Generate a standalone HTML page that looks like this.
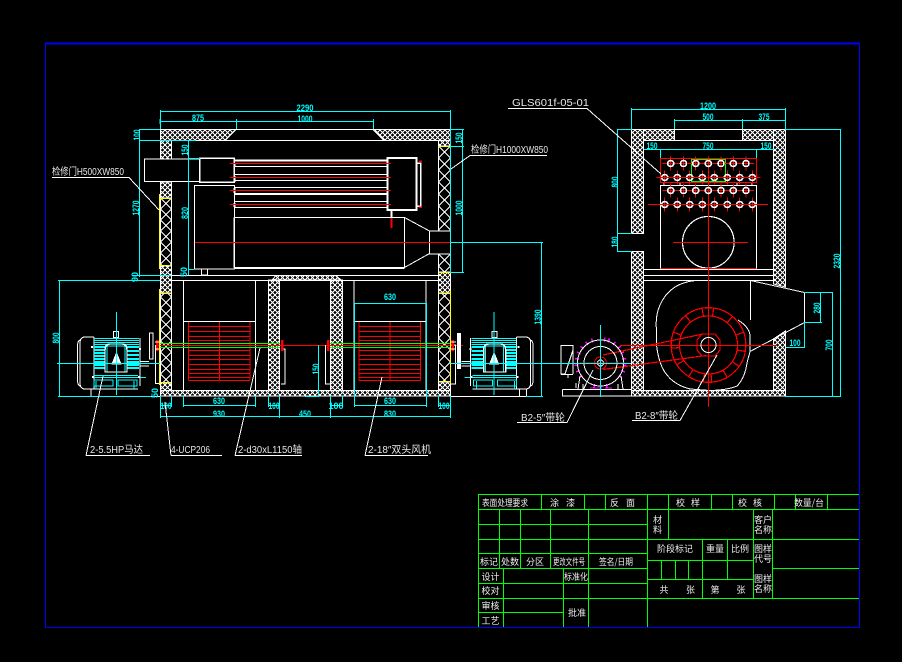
<!DOCTYPE html>
<html><head><meta charset="utf-8"><style>
html,body{margin:0;padding:0;background:#000;width:902px;height:662px;overflow:hidden}
svg{display:block}
.d{font:bold 9px "Liberation Sans",sans-serif;fill:#0ff;text-anchor:middle}
.l{font:10px "Liberation Sans","Noto Sans CJK SC",sans-serif;fill:#e8e8e8}
.t{font:9px "Noto Sans CJK SC","Liberation Sans",sans-serif;fill:#eee;text-anchor:middle}
</style></head><body>
<svg width="902" height="662" viewBox="0 0 902 662" xmlns="http://www.w3.org/2000/svg" shape-rendering="crispEdges">
<defs>
<pattern id="h" width="5" height="5" patternUnits="userSpaceOnUse"><rect width="5" height="5" fill="#000"/><path d="M0 0L5 5M5 0L0 5" stroke="#fff" stroke-width="1" fill="none"/></pattern>
<pattern id="x" x="160.5" y="198" width="11" height="11" patternUnits="userSpaceOnUse"><path d="M0 0L11 11M11 0L0 11" stroke="#fff" stroke-width="1" fill="none"/></pattern>
<pattern id="x2" x="438.5" y="146" width="12" height="12" patternUnits="userSpaceOnUse"><path d="M0 0L12 12M12 0L0 12" stroke="#fff" stroke-width="1" fill="none"/></pattern>
<g id="tb"><path d="M-8 0H8M0-7V7" stroke="#f00" fill="none"/><circle r="3" fill="none" stroke="#fff" stroke-width="1.6"/></g>
<g id="fan">
<path d="M188.5 321.5H250M188.5 326.5H250M188.5 331.5H250M188.5 336.5H250M188.5 340.5H250M188.5 350.5H250M188.5 355.5H250M188.5 359.5H250M188.5 364.5H250M188.5 369.5H250M188.5 373.5H250M188.5 377.5H250M188.5 380.5H250M188.5 321.5V380.5M250 321.5V380.5M219.5 321.5V380.5" stroke="#f00" fill="none"/>
<path d="M183.5 280V391M255.5 280V391M183.5 321.5H255.5" stroke="#fff" fill="none"/>
</g>
<g id="mot" fill="none">
<path d="M94 337H85Q80 337 80 343V383Q80 389 85 389H94M80 340Q77.5 341 77.5 346V380Q77.5 385 80 386M94 337V389M140 338V386M94 389H138" stroke="#fff"/>
<path d="M94 338.500H139M94 340.500H139M94 342.500H139M94 344.500H107M125 344.500H139M93 377.500H146M94 375.500H138M94 380H113V386H94ZM118 380H137V386H118ZM107 346V372H125V346Z" stroke="#0ff"/>
<path d="M94 347H105M94 350H105M94 353H105M94 356H105M94 359H105M94 362H105M94 365H105M127 347H139M127 351H139M127 355H139M127 359H139M127 362H139M127 365H139M127 368H139M94 368H105" stroke="#0ff" stroke-width="2"/>
<path d="M105 350Q105 344 110 344H122Q127 344 127 350V372H105Z" stroke="#fff" stroke-width="1.4"/>
<path d="M116.500 353L112 364H121Z" fill="#fff" stroke="#fff"/>
<rect x="113.500" y="331.500" width="5" height="6" stroke="#fff"/>
<path d="M140 361.500H149M140 366H149" stroke="#fff"/>
<path d="M91 396V389" stroke="#fff"/>
<rect x="91" y="346" width="2" height="2" fill="#fff"/><rect x="92" y="376" width="2" height="2" fill="#fff"/><rect x="138" y="376" width="2" height="2" fill="#fff"/><rect x="139" y="348" width="2" height="2" fill="#fff"/>
<path d="M116.500 312V395M57 363.500H160M96 381V389M134 381V389" stroke="#0ff"/>
</g>
</defs>
<rect width="902" height="662" fill="#000"/>
<!-- frame -->
<path d="M45.500 43V627.500H859.500V43" stroke="#00f" fill="none"/>
<path d="M45 43.500H860" stroke="#00f" stroke-width="2" fill="none"/>

<!-- front view hatch -->
<g stroke="#fff" stroke-width="1">
<path d="M160.500 129.500H236L225 140.500H160.500Z" fill="url(#h)"/>
<path d="M373 129.500H450.500V140.500H384Z" fill="url(#h)"/>
<rect x="160.500" y="140.500" width="11" height="18.500" fill="url(#h)"/>
<rect x="160.500" y="182" width="11" height="16" fill="url(#h)"/>
<rect x="160.500" y="198" width="11" height="68" fill="url(#x)"/>
<rect x="160.500" y="266" width="11" height="27" fill="url(#h)"/>
<rect x="160.500" y="293" width="11" height="90" fill="url(#x)"/>
<rect x="160.500" y="383" width="11" height="8" fill="url(#h)"/>
<rect x="438.500" y="140.500" width="12" height="5.500" fill="url(#h)"/>
<rect x="438.500" y="146" width="12" height="85" fill="url(#x2)"/>
<rect x="438.500" y="254" width="12" height="18" fill="url(#x2)"/>
<rect x="438.500" y="272" width="12" height="21" fill="url(#h)"/>
<rect x="438.500" y="293" width="12" height="89" fill="url(#x2)"/>
<rect x="438.500" y="382" width="12" height="9" fill="url(#h)"/>
<rect x="160.500" y="390.500" width="290" height="5.500" fill="url(#h)"/>
<rect x="268.500" y="280" width="11" height="110.500" fill="url(#h)"/>
<rect x="330.500" y="280" width="12" height="110.500" fill="url(#h)"/>
<path d="M272 280L276 275.500H336L341 280Z" fill="url(#h)"/>
</g>
<path d="M160.500 129.500H450.500M171.500 140.500H438.500M171.500 275.500H438.500M171.500 280.500H438.500" stroke="#fff" fill="none"/>

<!-- front unit -->
<g fill="none" stroke="#fff">
<rect x="144.500" y="159" width="55" height="22.500"/>
<rect x="199.500" y="158" width="34.500" height="24" stroke-width="1.5"/>
<rect x="194.500" y="185.500" width="40" height="83.500" stroke-width="1"/>
<path d="M234 160H387.500M234 166.500H387.500M234 174.500H387.500M234 180.500H387.500M234 187.500H387.500M234 201.500H387.500M234 207.500H387.500" />
<path d="M234 160.500H387M234 194H387" stroke-width="2"/>
<path d="M234 217.500H404.500V267.500M234 217.500V268" />
<path d="M234 268H404.500" stroke-width="2"/>
<rect x="387.500" y="158" width="29" height="52" stroke-width="2"/>
<path d="M417 163H420.500V206H417" stroke-width="1.500"/>
<path d="M404.500 217.500L429.500 231M404.500 267.500L429.500 253.500"/>
<rect x="429.500" y="231" width="21" height="23"/>
<rect x="201.500" y="269" width="6" height="6"/>
<path d="M391.500 211V218" stroke-width="2"/>
<path d="M234.500 163V167M234.500 176V182M234.500 188V193M234.500 203V207" stroke-width="2"/>
</g>
<path d="M230 163.500H391M230 177.500H391M230 190.500H391M230 204.500H391M195 242.500H450" stroke="#f00" fill="none"/>
<path d="M391.500 218V228" stroke="#f00" stroke-width="2" fill="none"/>
<path d="M419 161H422M419 207H422" stroke="#f00" stroke-width="1.500" fill="none"/>

<!-- fans -->
<use href="#fan"/>
<use href="#fan" transform="translate(170.500 0)"/>
<!-- shaft -->
<path d="M155 345.500H463" stroke="#f00" fill="none"/>
<path d="M160 343.500H280M160 347.500H280M330 343.500H450M330 347.500H450" stroke="#0f0" fill="none"/>
<g fill="none" stroke="#fff">
<path d="M155.500 345V383.500H160M281 349H285V384H281M325.500 345V384H330M451 345H455.500V384H451"/>
<rect x="149.500" y="333" width="3.500" height="26"/>
</g>
<rect x="457" y="333" width="4" height="36" fill="#fff"/>
<path d="M157 340V351M282 340V351M328 340V351M452.500 340V351" stroke="#f00" stroke-width="2.500" fill="none"/>
<path d="M155 342H160M155 349H160M450 342H456M450 349H456" stroke="#fff" fill="none"/>

<!-- yellow doors -->
<path d="M159.500 194V269M160 198.500H171.500M160 265.500H171.500M159.500 289V385M160 293.500H171.500M160 382.500H171.500M450.500 145V272M438.500 146.500H450.500M438.500 272.500H450.500M450.500 290V383M438.500 293.500H450.500M438.500 381.500H450.500" stroke="#ff0" stroke-width="1.200" fill="none"/>

<!-- motors -->
<use href="#mot"/>
<use href="#mot" transform="translate(610.600 0) scale(-1 1)"/>
<path d="M90.500 396.500H160.500M450.500 396.500H526.500M526.500 389V396" stroke="#fff" fill="none"/>

<!-- front dims -->
<g stroke="#0ff" fill="none">
<path d="M160.500 110V129M160 111.500H451M450.500 110V272M161 121.500H374M236.500 119V129M373.500 119V129M160 119V124"/>
<path d="M139.500 129V277M139 129.500H160M139 140.500H196M132 275.500H171M188.500 140V275M188 158.500H200M188 269.500H194"/>
<path d="M462.500 129V273M450 129.500H464M450 146.500H464M450 272.500H464"/>
<path d="M450 242.500H543M541.500 242V397M526 396.500H543"/>
<path d="M58 280.500H160M59.500 280V397M58 396.500H151"/>
<path d="M160.500 396V418M171.500 396V407M183.500 396V407M255.500 396V407M268.500 396V407M279.500 396V418M330.500 396V418M342.500 396V407M354.500 303V407M426.500 303V407M438.500 396V407M450.500 396V418"/>
<path d="M160 405.500H172M183 405.500H256M268 405.500H280M331 405.500H343M354 405.500H427M438 405.500H451M160 416.500H451M354 303.500H427"/>
<path d="M318.500 345V396M305 396.500H319"/>
</g>
<g class="d">
<text x="305" y="111" textLength="17" lengthAdjust="spacingAndGlyphs" class="d">2290</text>
<text x="198" y="121" class="d" textLength="12" lengthAdjust="spacingAndGlyphs">875</text>
<text x="305" y="122" class="d" textLength="15" lengthAdjust="spacingAndGlyphs">1000</text>
<text x="336" y="409" class="d">100</text>
<text x="219" y="404" class="d" textLength="12" lengthAdjust="spacingAndGlyphs">630</text>
<text x="166" y="409" class="d" textLength="11" lengthAdjust="spacingAndGlyphs">100</text>
<text x="274" y="409" class="d" textLength="11" lengthAdjust="spacingAndGlyphs">100</text>
<text x="390" y="300" class="d" textLength="12" lengthAdjust="spacingAndGlyphs">630</text>
<text x="390" y="404" class="d" textLength="12" lengthAdjust="spacingAndGlyphs">630</text>
<text x="444" y="409" class="d" textLength="11" lengthAdjust="spacingAndGlyphs">100</text>
<text x="219" y="417" class="d" textLength="12" lengthAdjust="spacingAndGlyphs">930</text>
<text x="305" y="417" class="d" textLength="12" lengthAdjust="spacingAndGlyphs">450</text>
<text x="390" y="417" class="d" textLength="12" lengthAdjust="spacingAndGlyphs">830</text>
<text class="d" transform="translate(140 135) rotate(-90)" textLength="11" lengthAdjust="spacingAndGlyphs">100</text>
<text class="d" transform="translate(139 208) rotate(-90)" textLength="15" lengthAdjust="spacingAndGlyphs">1270</text>
<text class="d" transform="translate(138 277) rotate(-90)">90</text>
<text class="d" transform="translate(188 150) rotate(-90)" textLength="11" lengthAdjust="spacingAndGlyphs">150</text>
<text class="d" transform="translate(188 213) rotate(-90)" textLength="12" lengthAdjust="spacingAndGlyphs">820</text>
<text class="d" transform="translate(187 272) rotate(-90)">50</text>
<text class="d" transform="translate(462 138) rotate(-90)" textLength="11" lengthAdjust="spacingAndGlyphs">150</text>
<text class="d" transform="translate(462 208) rotate(-90)" textLength="15" lengthAdjust="spacingAndGlyphs">1000</text>
<text class="d" transform="translate(541 317) rotate(-90)" textLength="15" lengthAdjust="spacingAndGlyphs">1390</text>
<text class="d" transform="translate(59 338) rotate(-90)" textLength="11" lengthAdjust="spacingAndGlyphs">800</text>
<text class="d" transform="translate(158 393) rotate(-90)">50</text>
<text class="d" transform="translate(319 369) rotate(-90)" textLength="11" lengthAdjust="spacingAndGlyphs">150</text>
</g>

<!-- side view -->
<g stroke="#fff">
<rect x="631.500" y="129.500" width="12" height="104" fill="url(#h)"/>
<rect x="631.500" y="251.500" width="12" height="139" fill="url(#h)"/>
<path d="M773.500 129.500H785.500V287L773.500 284Z" fill="url(#h)"/>
<path d="M785.500 331V390.500H773.500V339Z" fill="url(#h)"/>
<rect x="643.500" y="129.500" width="31" height="11" fill="url(#h)"/>
<rect x="742.500" y="129.500" width="31" height="11" fill="url(#h)"/>
<rect x="631.500" y="390.500" width="154" height="5.500" fill="url(#h)"/>
</g>
<g fill="none" stroke="#fff">
<path d="M631.500 129.500H785.500M643.500 140.500H773.500M643.500 269.500H773.500M643.500 275.500H773.500M643.500 280.500H773.500M631.500 233.500H643.500M631.500 251.500H643.500"/>
<rect x="660.500" y="185.500" width="96" height="83.500"/>
<path d="M664 183V185M680 183V185M737 183V185M752 183V185" />
<circle cx="708.300" cy="242.300" r="25.800" stroke-width="1.200"/>
<path d="M703 268.500H714" stroke-width="2"/>
<path d="M698 280.500H708Q672 278 660 305Q655 316 656.500 330V345Q658 358 662 367Q670 384 690 389L710 390.500Q728 390 737 386Q745 378 747 363L750 351.500V335Q749 327 738 320"/>
<path d="M750.500 280.500L804.500 292.500V322.500L750 351.500M750.500 280.500V320"/>
</g>
<rect x="660.500" y="158.500" width="96" height="24" fill="none" stroke="#f00" stroke-width="1.200"/>
<path d="M691.500 182V159.500H725.500V182M691 181.500H726" stroke="#0f0" fill="none"/>
<path d="M660.500 268.500H756.500" stroke="#f00" fill="none"/>
<path d="M708.500 158V407M673 242.500H748" stroke="#f00" fill="none"/>
<g>
<use href="#tb" x="670.700" y="163.500"/><use href="#tb" x="683.500" y="163.500"/><use href="#tb" x="695.700" y="163.500"/><use href="#tb" x="708.300" y="163.500"/><use href="#tb" x="721" y="163.500"/><use href="#tb" x="733.300" y="163.500"/><use href="#tb" x="746" y="163.500"/>
<use href="#tb" x="664.700" y="177.500"/><use href="#tb" x="677.300" y="177.500"/><use href="#tb" x="689.700" y="177.500"/><use href="#tb" x="702.300" y="177.500"/><use href="#tb" x="714.300" y="177.500"/><use href="#tb" x="727.300" y="177.500"/><use href="#tb" x="739.700" y="177.500"/><use href="#tb" x="752.300" y="177.500"/>
<use href="#tb" x="670.700" y="190.500"/><use href="#tb" x="683.500" y="190.500"/><use href="#tb" x="695.700" y="190.500"/><use href="#tb" x="708.300" y="190.500"/><use href="#tb" x="721" y="190.500"/><use href="#tb" x="733.300" y="190.500"/><use href="#tb" x="746" y="190.500"/>
<use href="#tb" x="664.700" y="204.500"/><use href="#tb" x="677.300" y="204.500"/><use href="#tb" x="689.700" y="204.500"/><use href="#tb" x="702.300" y="204.500"/><use href="#tb" x="714.300" y="204.500"/><use href="#tb" x="727.300" y="204.500"/><use href="#tb" x="739.700" y="204.500"/><use href="#tb" x="752.300" y="204.500"/>
</g>
<path d="M660 177.500H756M660 204.500H768M648 204.500H660" stroke="#f00" fill="none"/>

<!-- big fan -->
<g fill="none" stroke="#f00" stroke-width="1.200">
<circle cx="708.500" cy="345" r="37.300"/>
<circle cx="708.500" cy="345" r="29"/>
<path d="M697 340L702 334H715L720 340V350L715 356H702L697 350Z"/>
<path d="M708.500 316V307.700" transform="rotate(8 708.500 345)"/>
<path d="M708.500 316V307.700" transform="rotate(-10 708.500 345)"/>
<path d="M708.500 316V307.700" transform="rotate(40 708.500 345)"/>
<path d="M708.500 316V307.700" transform="rotate(-38 708.500 345)"/>
<path d="M708.500 316V307.700" transform="rotate(70 708.500 345)"/>
<path d="M708.500 316V307.700" transform="rotate(-70 708.500 345)"/>
<path d="M708.500 316V307.700" transform="rotate(100 708.500 345)"/>
<path d="M708.500 316V307.700" transform="rotate(-95 708.500 345)"/>
<path d="M708.500 316V307.700" transform="rotate(125 708.500 345)"/>
<path d="M708.500 316V307.700" transform="rotate(-122 708.500 345)"/>
<path d="M708.500 316V307.700" transform="rotate(150 708.500 345)"/>
<path d="M708.500 316V307.700" transform="rotate(-148 708.500 345)"/>
<path d="M708.500 316V307.700" transform="rotate(175 708.500 345)"/>
<path d="M708.500 316V307.700" transform="rotate(-172 708.500 345)"/>
<path d="M603 355L703 334M603 369.500L706 355.500"/>
</g>
<path d="M620 345.500H777" stroke="#f00" fill="none"/>
<circle cx="708.500" cy="345" r="7.500" fill="none" stroke="#fff"/>

<!-- side motor -->
<g fill="none">
<path d="M600.500 341V337" stroke="#f0f" stroke-width="2" transform="rotate(20 600.500 363)"/>
<g stroke="#f0f" stroke-width="1.500">
<path d="M600.500 341V337" transform="rotate(10 600.500 363)"/><path d="M600.500 341V337" transform="rotate(35 600.500 363)"/><path d="M600.500 341V337" transform="rotate(50 600.500 363)"/><path d="M600.500 341V337" transform="rotate(65 600.500 363)"/><path d="M600.500 341V337" transform="rotate(80 600.500 363)"/><path d="M600.500 341V337" transform="rotate(95 600.500 363)"/><path d="M600.500 341V337" transform="rotate(110 600.500 363)"/><path d="M600.500 341V337" transform="rotate(125 600.500 363)"/><path d="M600.500 341V337" transform="rotate(165 600.500 363)"/><path d="M600.500 341V337" transform="rotate(180 600.500 363)"/><path d="M600.500 341V337" transform="rotate(195 600.500 363)"/><path d="M600.500 341V337" transform="rotate(235 600.500 363)"/><path d="M600.500 341V337" transform="rotate(250 600.500 363)"/><path d="M600.500 341V337" transform="rotate(265 600.500 363)"/><path d="M600.500 341V337" transform="rotate(280 600.500 363)"/><path d="M600.500 341V337" transform="rotate(295 600.500 363)"/><path d="M600.500 341V337" transform="rotate(310 600.500 363)"/><path d="M600.500 341V337" transform="rotate(325 600.500 363)"/><path d="M600.500 341V337" transform="rotate(340 600.500 363)"/>
</g>
<g stroke="#fff">
<circle cx="600.500" cy="363" r="23"/>
<circle cx="600.500" cy="363" r="16.500"/>
<circle cx="600.500" cy="363" r="3"/>
<path d="M561 345.500H573V350L565 374H561ZM561 374.500H573M573 350V374M568 374.500V378"/>
<path d="M562.500 389.500H631.500M562.500 389.500V396H631.500"/>
<path d="M580 376L578 389M621 376L623 389M583 384V389M618 384V389M576 383V388"/>
</g>
<circle cx="600.500" cy="363" r="6" stroke="#f00"/>
<path d="M580 363H625" stroke="#f00"/>
<g stroke="#f0f"><path d="M590 388H600M605 388H612"/></g>
<path d="M600.500 325V397M510 363.500H631" stroke="#0ff"/>
</g>

<!-- side dims -->
<g stroke="#0ff" fill="none">
<path d="M631.500 108V129M631 109.500H786M785.500 108V129M674.500 119V129M674 120.500H786M742.500 119V129"/>
<path d="M617.500 129V252M617 129.500H632M617 233.500H632M617 251.500H632"/>
<path d="M644 149.500H774M660.500 149V158M756.500 149V158"/>
<path d="M785 129.500H841M840.500 129V397M785 396.500H841"/>
<path d="M804 292.500H833M820.500 293V322M804 322.500H822M804.500 322V347M786 347.500H805M832.500 292V397"/>
</g>
<text x="708" y="109" class="d" textLength="16" lengthAdjust="spacingAndGlyphs">1200</text>
<text x="708" y="120" class="d" textLength="11" lengthAdjust="spacingAndGlyphs">500</text>
<text x="764" y="120" class="d" textLength="11" lengthAdjust="spacingAndGlyphs">375</text>
<text x="652" y="149" class="d" textLength="11" lengthAdjust="spacingAndGlyphs">150</text>
<text x="708" y="149" class="d" textLength="11" lengthAdjust="spacingAndGlyphs">750</text>
<text x="766" y="149" class="d" textLength="11" lengthAdjust="spacingAndGlyphs">150</text>
<text x="795" y="346" class="d" textLength="11" lengthAdjust="spacingAndGlyphs">100</text>
<text class="d" transform="translate(618 182) rotate(-90)" textLength="11" lengthAdjust="spacingAndGlyphs">800</text>
<text class="d" transform="translate(618 242) rotate(-90)" textLength="11" lengthAdjust="spacingAndGlyphs">180</text>
<text class="d" transform="translate(820 308) rotate(-90)" textLength="11" lengthAdjust="spacingAndGlyphs">280</text>
<text class="d" transform="translate(832 345) rotate(-90)" textLength="11" lengthAdjust="spacingAndGlyphs">700</text>
<text class="d" transform="translate(840 261) rotate(-90)" textLength="15" lengthAdjust="spacingAndGlyphs">2320</text>

<!-- leaders -->
<g stroke="#fff" fill="none">
<path d="M508 108.500H587L661 174"/>
<path d="M52 177.500H129L159 210"/>
<path d="M451 169L470 155.500H547"/>
<path d="M86 455.500H150M86 455.500L103 376"/>
<path d="M171 455.500H222M171 455.500L165 402"/>
<path d="M235 455.500H302M235 455.500L260 348"/>
<path d="M365 455.500H428M365 455.500L382 377"/>
<path d="M517 422.500H567L593 370"/>
<path d="M632 420.500H680L717 355"/>
</g>
<text class="l" x="512" y="106" textLength="77" lengthAdjust="spacingAndGlyphs">GLS601f-05-01</text>
<text class="l" x="52" y="175" textLength="72" lengthAdjust="spacingAndGlyphs">检修门H500XW850</text>
<text class="l" x="471" y="153" textLength="77" lengthAdjust="spacingAndGlyphs">检修门H1000XW850</text>
<text class="l" x="90" y="453" textLength="53" lengthAdjust="spacingAndGlyphs">2-5.5HP马达</text>
<text class="l" x="171" y="453" textLength="39" lengthAdjust="spacingAndGlyphs">4-UCP206</text>
<text class="l" x="238" y="453" textLength="64" lengthAdjust="spacingAndGlyphs">2-d30xL1150轴</text>
<text class="l" x="368" y="453" textLength="63" lengthAdjust="spacingAndGlyphs">2-18″双头风机</text>
<text class="l" x="521" y="421" textLength="44" lengthAdjust="spacingAndGlyphs">B2-5″带轮</text>
<text class="l" x="635" y="419" textLength="43" lengthAdjust="spacingAndGlyphs">B2-8″带轮</text>

<!-- title block -->
<path d="M478.500 494.500H859M478.500 509.500H859M478.500 524.500H647M478.500 539.500H859M478.500 553.500H647M478.500 568.500H647M478.500 583.500H647M478.500 598.500H859M478.500 612.500H563M647 560.500H753M647 579.500H753M772 568.500H859
M478.500 494V627M499.500 509V568M520.500 509V568M550.500 509V568M588.500 509V627M503.500 568V627M563.500 568V627M541.500 494V509M584.500 494V509M605.500 494V509M647.500 494V627M668.500 494V539M711.500 494V509M732.500 494V509M774.500 494V509M795.500 494V509M827.500 494V509M753.500 509V598M772.500 509V598M702.500 539V598M727.500 539V579M661.500 560V579M675.500 560V579M688.500 560V579" stroke="#0f0" fill="none"/>
<g class="t">
<text x="505" y="506" class="t" textLength="46" lengthAdjust="spacingAndGlyphs">表面处理要求</text>
<text x="562.500" y="506" class="t" textLength="25">涂 漆</text>
<text x="622.500" y="506" class="t" textLength="25">反 面</text>
<text x="688" y="506" class="t" textLength="24">校 样</text>
<text x="750" y="506" class="t" textLength="24">校 核</text>
<text x="809" y="506" class="t" textLength="30" lengthAdjust="spacingAndGlyphs">数量/台</text>
<text x="657.500" y="523" class="t">材</text><text x="657.500" y="533" class="t">料</text>
<text x="763" y="523" class="t">客户</text><text x="763" y="533" class="t">名称</text>
<text x="763" y="552" class="t">图样</text><text x="763" y="562" class="t">代号</text>
<text x="763" y="582" class="t">图样</text><text x="763" y="592" class="t">名称</text>
<text x="675" y="552" class="t">阶段标记</text>
<text x="715" y="552" class="t">重量</text>
<text x="740" y="552" class="t">比例</text>
<text x="664" y="593" class="t">共</text><text x="690.500" y="593" class="t">张</text>
<text x="715" y="593" class="t">第</text><text x="741" y="593" class="t">张</text>
<text x="489" y="565" class="t">标记</text>
<text x="510" y="565" class="t">处数</text>
<text x="535" y="565" class="t">分区</text>
<text x="569" y="565" class="t" textLength="32" lengthAdjust="spacingAndGlyphs">更改文件号</text>
<text x="616" y="565" class="t" textLength="34" lengthAdjust="spacingAndGlyphs">签名/日期</text>
<text x="490.500" y="580" class="t">设计</text>
<text x="576" y="580" class="t" textLength="24" lengthAdjust="spacingAndGlyphs">标准化</text>
<text x="490.500" y="594" class="t">校对</text>
<text x="490.500" y="609" class="t">审核</text>
<text x="490.500" y="624" class="t">工艺</text>
<text x="577" y="616" class="t">批准</text>
</g>
</svg>
</body></html>
